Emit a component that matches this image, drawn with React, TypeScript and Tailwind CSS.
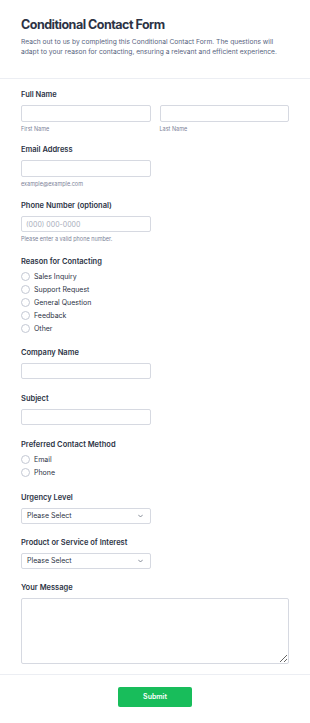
import React from 'react';

const labelCls = 'block text-[7.5px] leading-[10px] font-semibold text-[#2c3345] mb-[5px]';
const inputCls = 'block h-[16px] rounded-[2px] border border-[#d6d9e1] bg-white px-[4px] text-[7px] text-[#2c3345] outline-none';
const subCls = 'mt-[3px] text-[5.5px] leading-[8px] text-[#7c8398]';

function Radio({ label }: { label: string }) {
  return (
    <label className="flex h-[13px] items-center gap-[4px]">
      <span className="h-[9px] w-[9px] rounded-full border border-[#c3c8d3] bg-white" />
      <span className="text-[7px] leading-[10px] text-[#2c3345]">{label}</span>
    </label>
  );
}

function Select() {
  return (
    <div className={`${inputCls} flex w-[130px] items-center justify-between pl-[5px] pr-[7px]`}>
      <span>Please Select</span>
      <svg width="5" height="4" viewBox="0 0 10 6" fill="none" aria-hidden>
        <path d="M1 1l4 4 4-4" stroke="#6b7280" strokeWidth="1.6" strokeLinecap="round" strokeLinejoin="round" />
      </svg>
    </div>
  );
}

export default function App() {
  return (
    <div className="min-h-[723px] w-full bg-white font-['Inter','Liberation_Sans',sans-serif]">
      <header className="border-b border-[#eceef3] px-[21px] pt-[16px] pb-[21px]">
        <h1 className="text-[12.5px] leading-[18px] font-bold tracking-[-0.5px] text-[#2c3345]">
          Conditional Contact Form
        </h1>
        <p className="mt-[3px] text-[6.7px] leading-[10px] text-[#57647e]">
          Reach out to us by completing this Conditional Contact Form. The questions will adapt to your reason for
          contacting, ensuring a relevant and efficient experience.
        </p>
      </header>

      <form className="px-[21px] pt-[11px] pb-[10px]">
        <div className="mb-[12px]">
          <span className={labelCls}>Full Name</span>
          <div className="flex gap-[9px]">
            <div className="flex-1">
              <input className={`${inputCls} h-[17px] w-full`} />
              <p className={subCls}>First Name</p>
            </div>
            <div className="flex-1">
              <input className={`${inputCls} h-[17px] w-full`} />
              <p className={subCls}>Last Name</p>
            </div>
          </div>
        </div>

        <div className="mb-[13px]">
          <span className={labelCls}>Email Address</span>
          <input className={`${inputCls} h-[17px] w-[130px]`} />
          <p className={subCls}>example@example.com</p>
        </div>

        <div className="mb-[14px]">
          <span className={labelCls}>
            Phone Number <span>(optional)</span>
          </span>
          <input className={`${inputCls} w-[130px] placeholder:text-[#a9aebb]`} placeholder="(000) 000-0000" />
          <p className={subCls}>Please enter a valid phone number.</p>
        </div>

        <div className="mb-[13px]">
          <span className={`${labelCls} !mb-[3px]`}>Reason for Contacting</span>
          <div className="flex flex-col">
            {['Sales Inquiry', 'Support Request', 'General Question', 'Feedback', 'Other'].map((r) => (
              <Radio key={r} label={r} />
            ))}
          </div>
        </div>

        <div className="mb-[15px]">
          <span className={labelCls}>Company Name</span>
          <input className={`${inputCls} w-[130px]`} />
        </div>

        <div className="mb-[15px]">
          <span className={labelCls}>Subject</span>
          <input className={`${inputCls} w-[130px]`} />
        </div>

        <div className="mb-[14px]">
          <span className={`${labelCls} !mb-[3px]`}>Preferred Contact Method</span>
          <div className="flex flex-col">
            <Radio label="Email" />
            <Radio label="Phone" />
          </div>
        </div>

        <div className="mb-[14px]">
          <span className={labelCls}>Urgency Level</span>
          <Select />
        </div>

        <div className="mb-[14px]">
          <span className={labelCls}>Product or Service of Interest</span>
          <Select />
        </div>

        <div>
          <span className={labelCls}>Your Message</span>
          <textarea className="block h-[66px] w-full rounded-[2px] border border-[#d6d9e1] bg-white p-[4px] text-[7px] outline-none" />
        </div>
      </form>

      <footer className="flex justify-center border-t border-[#eceef3] pt-[12px] pb-[16px]">
        <button type="button" className="h-[20px] w-[74px] rounded-[2px] bg-[#18bd5b] text-[7px] font-semibold text-white">
          Submit
        </button>
      </footer>
    </div>
  );
}
